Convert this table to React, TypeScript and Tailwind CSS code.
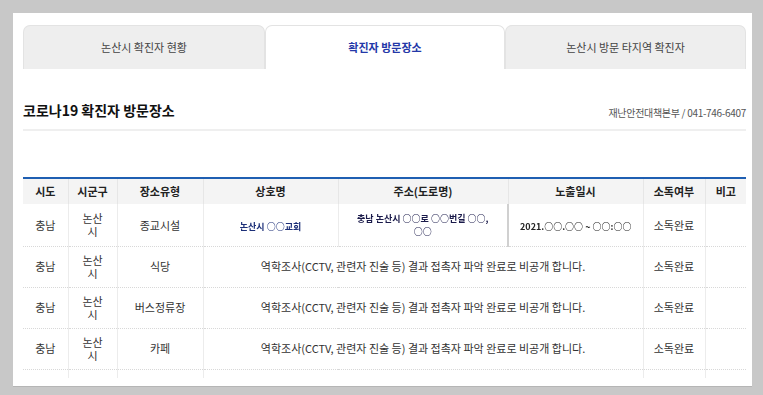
const rows = [
  { sido: "충남", gu: "논산", place: "종교시설", hidden: false },
  { sido: "충남", gu: "논산", place: "식당", hidden: true },
  { sido: "충남", gu: "논산", place: "버스정류장", hidden: true },
  { sido: "충남", gu: "논산", place: "카페", hidden: true },
];

const notice = "역학조사(CCTV, 관련자 진술 등) 결과 접촉자 파악 완료로 비공개 합니다.";

const tabs = [
  { label: "논산시 확진자 현황", w: "w-[242px]", active: false },
  { label: "확진자 방문장소", w: "w-[240px]", active: true },
  { label: "논산시 방문 타지역 확진자", w: "w-[241px]", active: false },
];

export default function App() {
  return (
    <div className="w-[763px] h-[395px] bg-[#c8c8c8] pt-[13px] pl-[13px] overflow-hidden font-['Noto_Sans_CJK_KR',sans-serif] text-[#333]">
      <div className="w-[739px] h-[374px] bg-white pl-[10px] pr-[6px] pt-[12px] overflow-hidden border-b border-[#b5b5b5]">
        {/* tabs */}
        <div className="flex h-[44px]">
          {tabs.map((t) => (
            <div
              key={t.label}
              className={
                t.active
                  ? `${t.w} flex items-center justify-center rounded-t-[7px] border border-b-0 border-[#e3e3e3] bg-white text-[11px] font-bold text-[#2438a8]`
                  : `${t.w} flex items-center justify-center rounded-t-[7px] border border-b-0 border-[#e3e3e3] bg-[#eeeeee] text-[11px] text-[#444]`
              }
            >
              {t.label}
            </div>
          ))}
        </div>

        {/* title */}
        <div className="mt-[31px] flex items-end justify-between border-b-2 border-[#efefef] pb-[9px]">
          <h2 className="text-[14px] leading-[20px] font-bold text-[#111]">코로나19 확진자 방문장소</h2>
          <span className="text-[10px] leading-[14px] tracking-[-0.3px] text-[#555]">재난안전대책본부 / 041-746-6407</span>
        </div>

        {/* table */}
        <div className="mt-[46px] h-[201px] overflow-hidden">
          <table className="w-[723px] table-fixed border-collapse border-t-2 border-[#1f5fb2] text-[11px]">
            <colgroup>
              <col className="w-[45px]" />
              <col className="w-[49px]" />
              <col className="w-[86px]" />
              <col className="w-[135px]" />
              <col className="w-[170px]" />
              <col className="w-[135px]" />
              <col className="w-[62px]" />
              <col className="w-[41px]" />
            </colgroup>
            <thead>
              <tr className="h-[26px] bg-[#f4f4f4] font-bold text-[#222]">
                <th className="font-bold">시도</th>
                <th className="border-l border-[#e6e6e6] font-bold">시군구</th>
                <th className="border-l border-[#e6e6e6] font-bold">장소유형</th>
                <th className="border-l border-[#e6e6e6] font-bold">상호명</th>
                <th className="border-l border-[#e6e6e6] font-bold">주소(도로명)</th>
                <th className="border-l border-[#e6e6e6] font-bold">노출일시</th>
                <th className="border-l border-[#e6e6e6] font-bold">소독여부</th>
                <th className="border-l border-[#e6e6e6] font-bold">비고</th>
              </tr>
            </thead>
            <tbody>
              {rows.map((r, i) => (
                <tr key={i} className={i === 0 ? "h-[42px] border-b border-dotted border-[#d8d8d8]" : "h-[41px] border-b border-dotted border-[#d8d8d8]"}>
                  <td className="text-center">{r.sido}</td>
                  <td className="border-l border-[#ececec] text-center">
                    <div className="leading-[13px]">{r.gu}</div>
                    <div className="leading-[13px]">시</div>
                  </td>
                  <td className="border-l border-[#ececec] text-center">{r.place}</td>
                  {r.hidden ? (
                    <td colSpan={3} className="border-l border-[#ececec] text-center">
                      {notice}
                    </td>
                  ) : (
                    <>
                      <td className="border-l border-[#ececec] text-center">
                        <span className="text-[9px] font-bold text-[#1c2f78] blur-[0.6px]">논산시 ○○교회</span>
                      </td>
                      <td className="border-l border-[#ececec] text-center">
                        <div className="text-[9px] leading-[13px] font-bold text-[#1a1a4a] blur-[0.6px]">충남 논산시 ○○로 ○○번길 ○○,</div>
                        <div className="text-[9px] leading-[13px] font-bold text-[#1a1a4a] blur-[0.6px]">○○</div>
                      </td>
                      <td className="border-l-2 border-[#d0d0d0] text-center">
                        <span className="text-[9px] font-bold text-[#222] blur-[0.6px]">2021.○○.○○ ~ ○○:○○</span>
                      </td>
                    </>
                  )}
                  <td className="border-l border-[#ececec] text-center">소독완료</td>
                  <td className="border-l border-[#ececec]"></td>
                </tr>
              ))}
              <tr className="h-[41px]">
                <td></td>
                <td className="border-l border-[#ececec]"></td>
                <td className="border-l border-[#ececec]"></td>
                <td colSpan={3} className="border-l border-[#ececec]"></td>
                <td className="border-l border-[#ececec]"></td>
                <td className="border-l border-[#ececec]"></td>
              </tr>
            </tbody>
          </table>
        </div>
      </div>
    </div>
  );
}
